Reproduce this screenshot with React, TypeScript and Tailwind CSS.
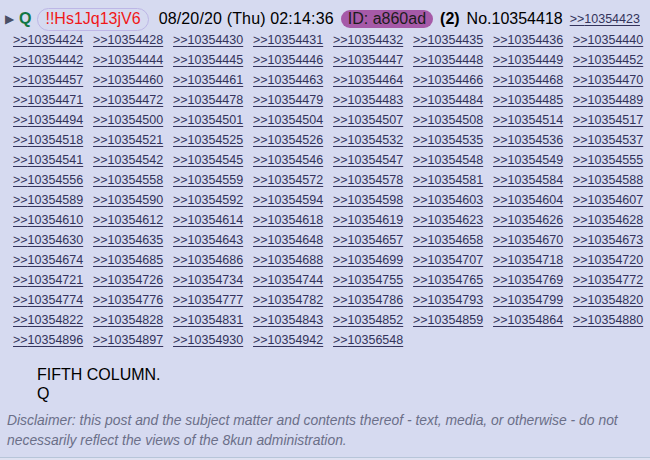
import React from "react";

const links = [
  "10354424", "10354428", "10354430", "10354431", "10354432", "10354435", "10354436", "10354440",
  "10354442", "10354444", "10354445", "10354446", "10354447", "10354448", "10354449", "10354452",
  "10354457", "10354460", "10354461", "10354463", "10354464", "10354466", "10354468", "10354470",
  "10354471", "10354472", "10354478", "10354479", "10354483", "10354484", "10354485", "10354489",
  "10354494", "10354500", "10354501", "10354504", "10354507", "10354508", "10354514", "10354517",
  "10354518", "10354521", "10354525", "10354526", "10354532", "10354535", "10354536", "10354537",
  "10354541", "10354542", "10354545", "10354546", "10354547", "10354548", "10354549", "10354555",
  "10354556", "10354558", "10354559", "10354572", "10354578", "10354581", "10354584", "10354588",
  "10354589", "10354590", "10354592", "10354594", "10354598", "10354603", "10354604", "10354607",
  "10354610", "10354612", "10354614", "10354618", "10354619", "10354623", "10354626", "10354628",
  "10354630", "10354635", "10354643", "10354648", "10354657", "10354658", "10354670", "10354673",
  "10354674", "10354685", "10354686", "10354688", "10354699", "10354707", "10354718", "10354720",
  "10354721", "10354726", "10354734", "10354744", "10354755", "10354765", "10354769", "10354772",
  "10354774", "10354776", "10354777", "10354782", "10354786", "10354793", "10354799", "10354820",
  "10354822", "10354828", "10354831", "10354843", "10354852", "10354859", "10354864", "10354880",
  "10354896", "10354897", "10354930", "10354942", "10356548",
];

function Backlink({ id }: { id: string }) {
  return (
    <a className="text-[12.5px] leading-[20px] text-[#34345c] underline decoration-1 underline-offset-2 whitespace-nowrap">
      &gt;&gt;{id}
    </a>
  );
}

export default function App() {
  return (
    <div className="w-[650px] h-[460px] bg-[#dfe1f1] font-['Liberation_Sans',Arial,sans-serif]">
      <div className="bg-[#d6daf0] border-b border-[#b7c5d9] h-[458px]">
        {/* post header */}
        <div className="flex items-center h-[38px] text-[16px] text-[#000] leading-[20px]">
          <span className="ml-[5px] text-[12px] text-[#4a4f66]">▶</span>
          <span className="ml-[5px] font-bold text-[#117743]">Q</span>
          <span className="ml-[6px] px-[7px] h-[23px] flex items-center rounded-full border border-[#bdb6e6] text-[#f01818]">
            !!Hs1Jq13jV6
          </span>
          <span className="ml-[10px] tracking-[0.15px]">08/20/20 (Thu) 02:14:36</span>
          <span className="ml-[7px] px-[7px] h-[18px] flex items-center rounded-full bg-[#a65aa8] text-[#1c1c1c]">
            ID: a860ad
          </span>
          <span className="ml-[7px] font-bold">(2)</span>
          <span className="ml-[7px]">No.10354418</span>
          <span className="ml-[7px] flex">
            <Backlink id="10354423" />
          </span>
        </div>

        {/* backlinks */}
        <div className="-mt-[8px] pl-[13px] grid grid-cols-[repeat(8,80px)]">
          {links.map((id) => (
            <div key={id} className="h-[20px] flex items-center">
              <Backlink id={id} />
            </div>
          ))}
        </div>

        {/* body */}
        <div className="mt-[15px] pl-[37px] text-[16px] leading-[19px] text-[#000]">
          <p>FIFTH COLUMN.</p>
          <p>Q</p>
        </div>

        <p className="mt-[7px] pl-[7px] pr-[20px] text-[13.9px] leading-[20px] italic text-[#6b6f88]">
          Disclaimer: this post and the subject matter and contents thereof - text, media, or otherwise - do not
          necessarily reflect the views of the 8kun administration.
        </p>
      </div>
    </div>
  );
}
